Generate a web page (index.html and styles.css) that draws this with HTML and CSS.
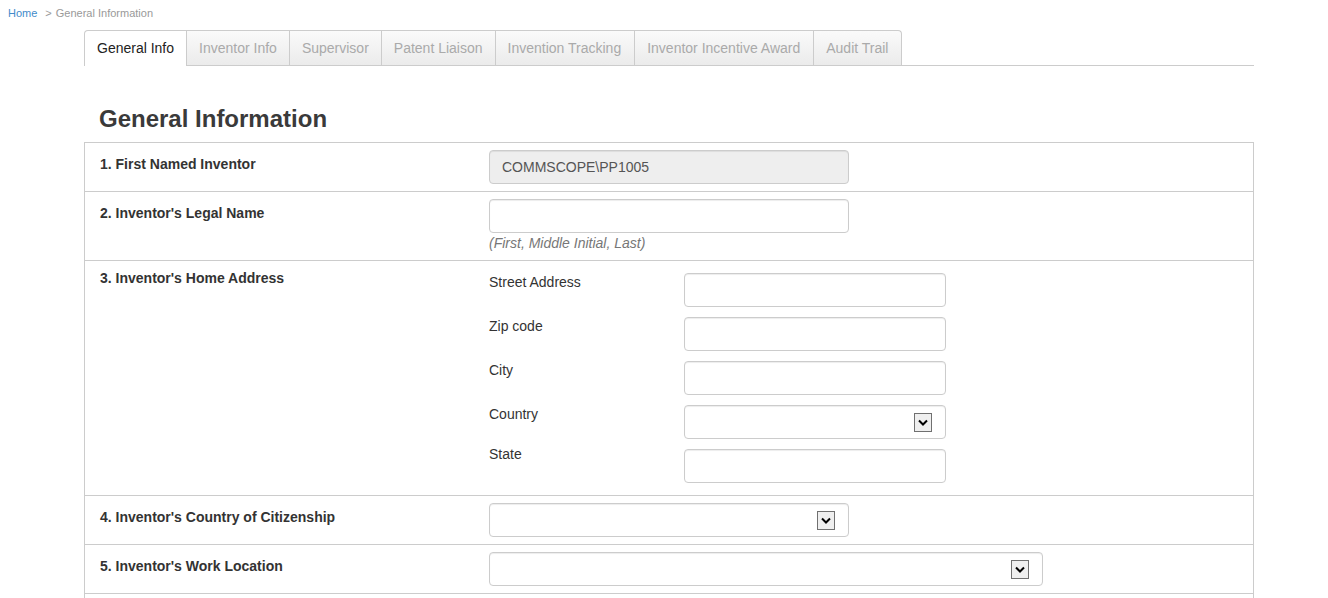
FILE: index.html
```html
<!DOCTYPE html>
<html>
<head>
<meta charset="utf-8">
<title>General Information</title>
<link rel="stylesheet" href="styles.css">
</head>
<body>
<div class="breadcrumb"><a href="#" class="crumb-home">Home</a><span class="crumb-sep">&gt;</span><span class="crumb-current">General Information</span></div>
<div class="page">
  <ul class="tabs">
    <li class="tab active">General Info</li>
    <li class="tab">Inventor Info</li>
    <li class="tab">Supervisor</li>
    <li class="tab">Patent Liaison</li>
    <li class="tab">Invention Tracking</li>
    <li class="tab">Inventor Incentive Award</li>
    <li class="tab">Audit Trail</li>
  </ul>
  <h2 class="title">General Information</h2>
  <div class="form-table">
    <div class="row">
      <div class="label">1. First Named Inventor</div>
      <div class="field">
        <div class="input readonly">COMMSCOPE\PP1005</div>
      </div>
    </div>
    <div class="row">
      <div class="label">2. Inventor's Legal Name</div>
      <div class="field">
        <div class="input"></div>
        <div class="hint">(First, Middle Initial, Last)</div>
      </div>
    </div>
    <div class="row">
      <div class="label label-top">3. Inventor's Home Address</div>
      <div class="field address">
        <div class="sub-row"><div class="sub-label">Street Address</div><div class="input sub-input"></div></div>
        <div class="sub-row"><div class="sub-label">Zip code</div><div class="input sub-input"></div></div>
        <div class="sub-row"><div class="sub-label">City</div><div class="input sub-input"></div></div>
        <div class="sub-row"><div class="sub-label">Country</div><div class="input sub-input select"><span class="drop"><svg width="10" height="7" viewBox="0 0 10 7"><path d="M1 1.5 L5 5.5 L9 1.5" fill="none" stroke="#000" stroke-width="2"/></svg></span></div></div>
        <div class="sub-row"><div class="sub-label sub-label-up">State</div><div class="input sub-input"></div></div>
      </div>
    </div>
    <div class="row">
      <div class="label">4. Inventor's Country of Citizenship</div>
      <div class="field">
        <div class="input select"><span class="drop"><svg width="10" height="7" viewBox="0 0 10 7"><path d="M1 1.5 L5 5.5 L9 1.5" fill="none" stroke="#000" stroke-width="2"/></svg></span></div>
      </div>
    </div>
    <div class="row">
      <div class="label">5. Inventor's Work Location</div>
      <div class="field">
        <div class="input select wide"><span class="drop"><svg width="10" height="7" viewBox="0 0 10 7"><path d="M1 1.5 L5 5.5 L9 1.5" fill="none" stroke="#000" stroke-width="2"/></svg></span></div>
      </div>
    </div>
    <div class="row">
      <div class="label">&nbsp;</div>
      <div class="field"><div class="input"></div></div>
    </div>
  </div>
</div>
</body>
</html>
```

FILE: styles.css
```css
* { box-sizing: border-box; }
html, body { margin: 0; padding: 0; background: #fff; }
body {
  font-family: "Liberation Sans", Arial, Helvetica, sans-serif;
  font-size: 14px;
  color: #333;
  overflow: hidden;
}
.breadcrumb {
  padding: 5px 8px 0;
  font-size: 11px;
  line-height: 16px;
  height: 30px;
}
.crumb-home { color: #428bca; text-decoration: none; }
.crumb-sep { color: #999; margin: 0 4px 0 8px; }
.crumb-current { color: #999; }

.page {
  margin-left: 84px;
  width: 1170px;
}
.tabs {
  list-style: none;
  margin: 0;
  padding: 0;
  display: flex;
  border-bottom: 1px solid #ccc;
  height: 36px;
}
.tab {
  font-size: 14px;
  line-height: 20px;
  padding: 7px 12px 8px;
  color: #aaa;
  border: 1px solid #ccc;
  border-bottom: none;
  border-left: none;
  background: linear-gradient(#fafafa, #ebebeb);
  height: 35px;
}
.tab:nth-child(5), .tab:nth-child(6), .tab:nth-child(7) { padding-right: 13px; }
.tab:last-child { border-top-right-radius: 4px; }
.tab.active {
  color: #222;
  background: #fff;
  border-left: 1px solid #ccc;
  border-top-left-radius: 4px;
  height: 36px;
}
.title {
  margin: 40px 0 10px;
  padding-left: 15px;
  font-size: 24px;
  line-height: 26px;
  font-weight: bold;
  color: #3a3a3a;
}
.form-table {
  border: 1px solid #ccc;
  border-bottom: none;
}
.row {
  display: flex;
  border-bottom: 1px solid #ccc;
  padding: 7px 0;
}
.label {
  width: 404px;
  padding: 4px 0 0 15px;
  font-weight: bold;
  line-height: 20px;
  color: #333;
}
.label-top { padding-top: 0; }
.field { flex: 1; }
.input {
  width: 360px;
  height: 34px;
  border: 1px solid #ccc;
  border-radius: 4px;
  background: #fff;
  box-shadow: inset 0 1px 1px rgba(0,0,0,0.075);
  padding: 0 12px;
  line-height: 32px;
  color: #555;
  font-size: 14px;
}
.input.readonly { background: #eee; }
.hint {
  font-style: italic;
  color: #777;
  line-height: 20px;
}
.address {
  display: flex;
  flex-direction: column;
  gap: 10px;
  padding: 5px 0;
}
.sub-row { display: flex; }
.sub-label { width: 195px; line-height: 20px; margin-top: -1px; }
.sub-label-up { margin-top: -5px; }
.sub-input { width: 262px; }
.select {
  display: flex;
  align-items: center;
  justify-content: flex-end;
  padding-right: 13px;
}
.select.wide { width: 554px; }
.drop {
  width: 18px;
  height: 19px;
  border: 1px solid #707070;
  background: #efefef;
  display: flex;
  align-items: center;
  justify-content: center;
}
.drop svg { display: block; }
```
